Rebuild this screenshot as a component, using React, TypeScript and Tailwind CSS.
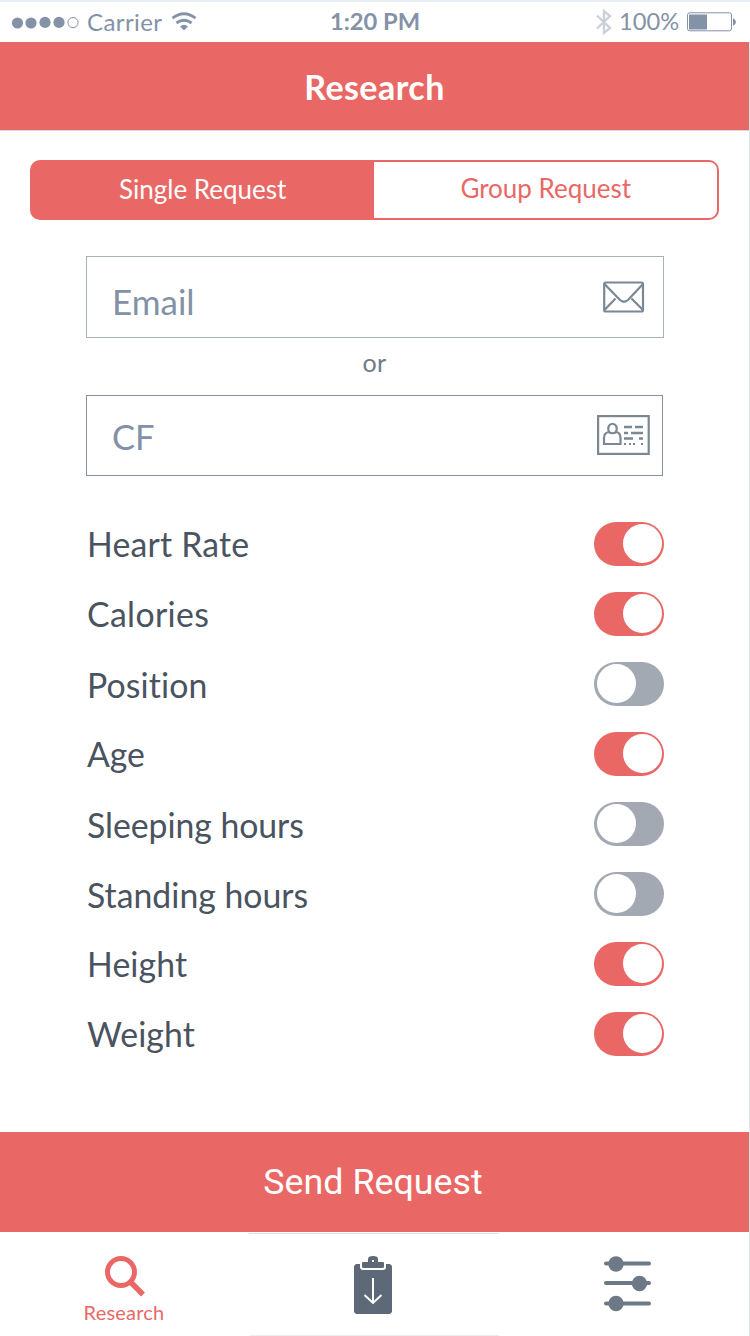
import { useState } from "react";

const metrics: { label: string; on: boolean; type: string }[] = [
  { label: "Heart Rate", on: true, type: "pt-[2px] tracking-[0.2px]" },
  { label: "Calories", on: true, type: "pt-[2px] tracking-[0.35px]" },
  { label: "Position", on: false, type: "pt-[4px] tracking-[0.1px]" },
  { label: "Age", on: true, type: "pt-[2px] tracking-[-0.1px]" },
  { label: "Sleeping hours", on: false, type: "pt-[4px] tracking-[-0.05px]" },
  { label: "Standing hours", on: false, type: "pt-[4px]" },
  { label: "Height", on: true, type: "pt-[2px] tracking-[0.1px]" },
  { label: "Weight", on: true, type: "pt-[2px] tracking-[0.1px]" },
];

function StatusBar() {
  return (
    <div className="grid h-[42px] grid-cols-3 items-center border-t-2 border-[#e9edf5] text-2xl leading-none text-[#8492a7]">
      <div className="flex items-center pl-3">
        <svg width="68" height="13" viewBox="0 0 68 13" fill="currentColor">
          <circle cx="5.5" cy="7" r="5.6" />
          <circle cx="19" cy="7" r="5.6" />
          <circle cx="33" cy="6.4" r="5.6" />
          <circle cx="47" cy="6.4" r="5.6" />
          <circle cx="61" cy="6.6" r="5.1" fill="none" stroke="currentColor" />
        </svg>
        <span className="ml-[7px] w-[75px] whitespace-nowrap pb-px tracking-[0.4px]">Carrier</span>
        <svg className="ml-[9px]" width="26" height="20" viewBox="0 0 26 20" fill="none" stroke="currentColor" strokeWidth="2.8">
          <path d="M1.5 6.2Q13-2.6 24.5 6.2M5.5 11Q13 5.5 20.5 11" />
          <path d="M9 14.5Q13 11 17 14.5L13 18.5Z" fill="currentColor" stroke="none" />
        </svg>
      </div>
      <div className="text-center text-[23.7px] font-bold">1:20 PM</div>
      <div className="flex items-center justify-end pr-[13px]">
        <svg width="16" height="28" viewBox="0 0 16 28" fill="none" stroke="#ccd1d9" strokeWidth="2.4">
          <path d="M1 7.5 14 20 8 25V3l6 5L1 20.5" />
        </svg>
        <span className="ml-[7px] w-[61px] whitespace-nowrap text-[23.7px]">100%</span>
        <svg className="ml-[7px]" width="50" height="20" viewBox="0 0 50 20">
          <rect x=".5" y=".8" width="44" height="18" rx="2" fill="none" stroke="currentColor" />
          <path d="M2 2.5h18v15H2Z" fill="currentColor" />
          <path d="M46 6q6 4 0 8Z" fill="currentColor" />
        </svg>
      </div>
    </div>
  );
}

function Toggle({ on, label, onClick }: { on: boolean; label: string; onClick: () => void }) {
  return (
    <button
      type="button"
      role="switch"
      aria-checked={on}
      aria-label={label}
      onClick={onClick}
      className={`flex h-11 w-[70px] items-center rounded-full pb-px ${on ? "justify-end bg-[#e96866] pr-[2px]" : "justify-start bg-[#a2a9b3] pl-[3px]"}`}
    >
      <span className="size-[39px] rounded-full bg-white" />
    </button>
  );
}

function MailIcon() {
  return (
    <svg width="42" height="32" viewBox="0 0 42 32" fill="none" stroke="#7c8794" strokeWidth="2.2">
      <rect x="1.2" y="1.5" width="38.8" height="29" rx="1.5" />
      <path d="M1.5 3 17 19q4 3.5 8 0L40 3M1.5 29 12.5 17.5M40 29 28.5 17.5" />
    </svg>
  );
}

function CardIcon() {
  return (
    <svg width="53" height="40" viewBox="0 0 53 40" fill="none" stroke="#7c8794" strokeWidth="2.2">
      <rect x="1.1" y="1.1" width="50.6" height="37.8" />
      <path d="M12 17c-4-11 11-11 7 0M7 29v-6q0-5 4.5-6 4 2.5 8 0 4 1 4 6v6Z" />
      <path d="M27 12h8M38 12h8M27 18h4M34 18h12M27 23.5h9M42 23.5h4" strokeWidth="2.6" />
      <path d="M27 29h2M32 29h2M36 29h2M44 29h2" strokeWidth="2" />
    </svg>
  );
}

export default function App() {
  const [rows, setRows] = useState(metrics);
  const toggle = (i: number) => setRows(rows.map((r, j) => (j === i ? { ...r, on: !r.on } : r)));
  return (
    <main className="flex h-[1336px] w-[750px] flex-col bg-white font-['Lato',sans-serif] [font-variant-ligatures:none]">
      <StatusBar />
      <div className="flex w-full flex-1 flex-col border-r border-[#e1e6ee]">
        <header className="flex h-[89px] items-center justify-center border-b border-[#d3d9e6] bg-[#e96866] pt-px text-[34px] font-bold leading-none tracking-[0.45px] text-white">
          Research
        </header>

        <div className="mx-[30px] mt-[29px] flex h-[60px] w-[689px] text-[26px] leading-none">
          <button type="button" className="flex w-[343.5px] items-center justify-center rounded-l-[10px] bg-[#e96866] pb-[2px] pl-[2px] text-white">
            Single Request
          </button>
          <button type="button" className="flex flex-1 items-center justify-center rounded-r-[10px] border-2 border-l-0 border-[#e96866] pb-1 pl-px text-[#e96866]">
            Group Request
          </button>
        </div>

        <div className="ml-[86px] mt-9 flex h-[82px] w-[578px] items-center justify-between border border-[#a7b0bc] pl-[25px] pr-[18px] text-[#8291a6]">
          <span className="pt-[9px] text-[35px] leading-none">Email</span>
          <MailIcon />
        </div>
        <p className="mt-[11px] h-[28px] text-center text-[25px] leading-[27px] tracking-[0.4px] text-[#707a87]">or</p>
        <div className="ml-[86px] mt-[18px] flex h-[81px] w-[577px] items-center justify-between border border-[#8492a7] pb-px pl-[25px] pr-[12px] text-[#8291a6]">
          <span className="pt-[5px] text-[34.5px] leading-none">CF</span>
          <CardIcon />
        </div>

        <ul className="ml-[87px] mt-[33px] w-[577px]">
          {rows.map((row, i) => (
            <li key={row.label} className="flex h-[70px] items-center justify-between">
              <span className={`text-[33.8px] leading-none text-[#4a5360] ${row.type}`}>{row.label}</span>
              <Toggle on={row.on} label={row.label} onClick={() => toggle(i)} />
            </li>
          ))}
        </ul>

        <button type="button" className="mt-auto flex h-[100px] w-full items-center justify-center bg-[#e96866] pr-[3px] pt-px text-[35.8px] leading-none text-white font-['Roboto',sans-serif]">
          Send Request
        </button>

        <nav className="flex h-[104px]">
          <button type="button" className="flex w-[248px] flex-col items-center pt-[23px] text-[20px] leading-none text-[#e96866]">
            <svg className="ml-[2px]" width="42" height="42" viewBox="0 0 42 42" fill="none" stroke="currentColor">
              <circle cx="17" cy="17" r="13.5" strokeWidth="5" />
              <path d="m26.5 27 12.5 12.5" strokeWidth="5.5" />
            </svg>
            <span className="mt-[5px] tracking-[0.2px]">Research</span>
          </button>
          <button type="button" aria-label="Requests" className="ml-px mt-px flex w-[250px] justify-center border-b border-t border-b-[#ededed] border-t-[#e2e3e7] pr-[2px] pt-[22px]">
            <svg width="38" height="58" viewBox="0 0 38 58">
              <path d="M2 8H6v3q0 3 3 3H29q3 0 3-3V8h4l2 2v46l-2 2H2l-2-2V10Z" fill="#5e6977" />
              <path fillRule="evenodd" d="M8 7q0-1 1-1h5V3q0-3 5-3t5 3v3h5q1 0 1 1v4q0 1-2 1H10q-2 0-2-1ZM18 4v2h2V4Z" fill="#5e6977" />
              <path d="M19 22v25M10.5 39l8.5 8 8.5-8" fill="none" stroke="white" strokeWidth="2" />
            </svg>
          </button>
          <button type="button" aria-label="Settings" className="flex flex-1 justify-center pl-[7px] pt-6">
            <svg width="48" height="56" viewBox="0 0 48 56" fill="#6d7986" stroke="#6d7986" strokeWidth="4" strokeLinecap="round">
              <path d="M2 7.5h43M2 27h43M2 47.5h43" />
              <circle cx="12" cy="8" r="7.7" stroke="none" />
              <circle cx="35.5" cy="27.5" r="7.7" stroke="none" />
              <circle cx="12" cy="47.5" r="7.7" stroke="none" />
            </svg>
          </button>
        </nav>
      </div>
    </main>
  );
}
